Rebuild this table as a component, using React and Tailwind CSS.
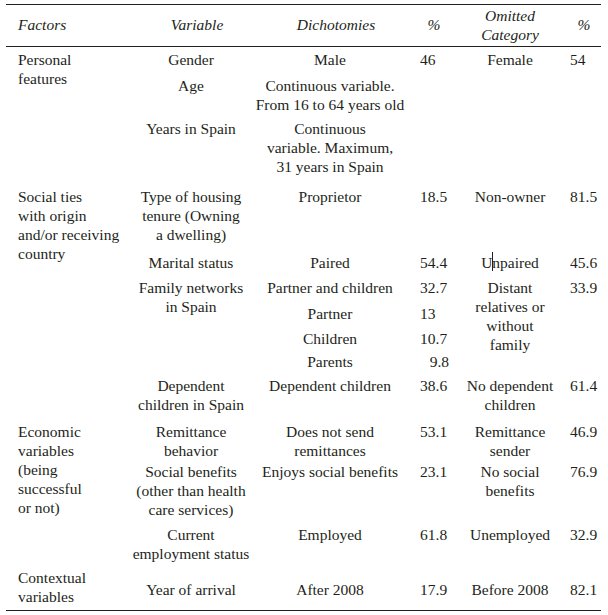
import React from 'react'

// column helpers
const F = 'pl-3 text-left'
const V = 'text-center'
const D = 'text-center'
const P = 'pl-3 text-left'
const O = 'text-center'
const Q = 'pl-[10px] text-left'

function Td({ className = '', children, ...rest }) {
  return (
    <td className={`p-0 align-top whitespace-nowrap ${className}`} {...rest}>
      {children}
    </td>
  )
}

function Th({ className = '', children, ...rest }) {
  return (
    <th className={`px-0 py-[2px] align-middle font-normal italic whitespace-nowrap ${className}`} {...rest}>
      {children}
    </th>
  )
}

export default function App() {
  return (
    <div className="min-h-[615px] w-[608px] bg-white pt-[4px] pl-[6px] font-['Liberation_Serif',serif] text-[15.5px] leading-[19px] text-[#231f20]">
      <table className="w-[595px] table-fixed border-collapse">
        <colgroup>
          <col className="w-[124px]" />
          <col className="w-[122px]" />
          <col className="w-[156px]" />
          <col className="w-[52px]" />
          <col className="w-[100px]" />
          <col className="w-[41px]" />
        </colgroup>
        <thead>
          <tr className="border-y border-[#231f20] leading-[18.5px]">
            <Th className="pl-3 text-left">Factors</Th>
            <Th className="pl-[12px] text-center">Variable</Th>
            <Th className="pl-[12px] text-center">Dichotomies</Th>
            <Th className="text-center">%</Th>
            <Th className="text-center">
              Omitted
              <br />
              Category
            </Th>
            <Th className="pl-[7px] text-center">%</Th>
          </tr>
        </thead>
        <tbody>
          {/* Personal features */}
          <tr>
            <Td className={`${F} pt-[3px]`} rowSpan={3}>
              Personal
              <br />
              features
            </Td>
            <Td className={`${V} pt-[3px]`}>Gender</Td>
            <Td className={`${D} pt-[3px]`}>Male</Td>
            <Td className={`${P} pt-[3px]`}>46</Td>
            <Td className={`${O} pt-[3px]`}>Female</Td>
            <Td className={`${Q} pt-[3px]`}>54</Td>
          </tr>
          <tr>
            <Td className={`${V} pt-[7px]`}>Age</Td>
            <Td className={`${D} pt-[7px]`}>
              Continuous variable.
              <br />
              From 16 to 64 years old
            </Td>
            <Td className="pt-[7px]" />
            <Td className="pt-[7px]" />
            <Td className="pt-[7px]" />
          </tr>
          <tr>
            <Td className={`${V} pt-[5px]`}>Years in Spain</Td>
            <Td className={`${D} pt-[5px]`}>
              Continuous
              <br />
              variable. Maximum,
              <br />
              31 years in Spain
            </Td>
            <Td className="pt-[5px]" />
            <Td className="pt-[5px]" />
            <Td className="pt-[5px]" />
          </tr>

          {/* Social ties */}
          <tr>
            <Td className={`${F} pt-[11px]`} rowSpan={7}>
              Social ties
              <br />
              with origin
              <br />
              and/or receiving
              <br />
              country
            </Td>
            <Td className={`${V} pt-[11px]`}>
              Type of housing
              <br />
              tenure (Owning
              <br />
              a dwelling)
            </Td>
            <Td className={`${D} pt-[11px]`}>Proprietor</Td>
            <Td className={`${P} pt-[11px]`}>18.5</Td>
            <Td className={`${O} pt-[11px]`}>Non-owner</Td>
            <Td className={`${Q} pt-[11px]`}>81.5</Td>
          </tr>
          <tr>
            <Td className={`${V} pt-[9px]`}>Marital status</Td>
            <Td className={`${D} pt-[9px]`}>Paired</Td>
            <Td className={`${P} pt-[9px]`}>54.4</Td>
            <Td className={`${O} pt-[9px]`}>
              <span className="relative">
                U
                <span className="absolute top-[-2px] right-[-1px] h-[19px] w-px bg-[#231f20]" />
              </span>
              npaired
            </Td>
            <Td className={`${Q} pt-[9px]`}>45.6</Td>
          </tr>
          <tr>
            <Td className={`${V} pt-[5.5px]`} rowSpan={4}>
              Family networks
              <br />
              in Spain
            </Td>
            <Td className={`${D} pt-[5.5px]`}>Partner and children</Td>
            <Td className={`${P} pt-[5.5px]`}>32.7</Td>
            <Td className={`${O} pt-[5.5px]`} rowSpan={4}>
              Distant
              <br />
              relatives or
              <br />
              without
              <br />
              family
            </Td>
            <Td className={`${Q} pt-[5.5px]`} rowSpan={4}>33.9</Td>
          </tr>
          <tr>
            <Td className={`${D} pt-[7px]`}>Partner</Td>
            <Td className={`${P} pt-[7px]`}>13</Td>
          </tr>
          <tr>
            <Td className={`${D} pt-[6px]`}>Children</Td>
            <Td className={`${P} pt-[6px]`}>10.7</Td>
          </tr>
          <tr>
            <Td className={`${D} pt-[4.5px]`}>Parents</Td>
            <Td className="pt-[4.5px] pr-[11px] text-right">9.8</Td>
          </tr>
          <tr>
            <Td className={`${V} pt-[5px]`}>
              Dependent
              <br />
              children in Spain
            </Td>
            <Td className={`${D} pt-[5px]`}>Dependent children</Td>
            <Td className={`${P} pt-[5px]`}>38.6</Td>
            <Td className={`${O} pt-[5px]`}>
              No dependent
              <br />
              children
            </Td>
            <Td className={`${Q} pt-[5px]`}>61.4</Td>
          </tr>

          {/* Economic variables */}
          <tr>
            <Td className={`${F} pt-[7.5px]`} rowSpan={3}>
              Economic
              <br />
              variables
              <br />
              (being
              <br />
              successful
              <br />
              or not)
            </Td>
            <Td className={`${V} pt-[7.5px]`}>
              Remittance
              <br />
              behavior
            </Td>
            <Td className={`${D} pt-[7.5px]`}>
              Does not send
              <br />
              remittances
            </Td>
            <Td className={`${P} pt-[7.5px]`}>53.1</Td>
            <Td className={`${O} pt-[7.5px]`}>
              Remittance
              <br />
              sender
            </Td>
            <Td className={`${Q} pt-[7.5px]`}>46.9</Td>
          </tr>
          <tr>
            <Td className={`${V} pt-[2.5px]`}>
              Social benefits
              <br />
              (other than health
              <br />
              care services)
            </Td>
            <Td className={`${D} pt-[2.5px]`}>Enjoys social benefits</Td>
            <Td className={`${P} pt-[2.5px]`}>23.1</Td>
            <Td className={`${O} pt-[2.5px]`}>
              No social
              <br />
              benefits
            </Td>
            <Td className={`${Q} pt-[2.5px]`}>76.9</Td>
          </tr>
          <tr>
            <Td className={`${V} pt-[6px]`}>
              Current
              <br />
              employment status
            </Td>
            <Td className={`${D} pt-[6px]`}>Employed</Td>
            <Td className={`${P} pt-[6px]`}>61.8</Td>
            <Td className={`${O} pt-[6px]`}>Unemployed</Td>
            <Td className={`${Q} pt-[6px]`}>32.9</Td>
          </tr>

          {/* Contextual variables */}
          <tr className="border-b border-[#231f20]">
            <Td className={`${F} pt-[5px] pb-[3.5px]`}>
              Contextual
              <br />
              variables
            </Td>
            <Td className={`${V} pt-[10px] pb-[3.5px] !align-middle`}>Year of arrival</Td>
            <Td className={`${D} pt-[10px] pb-[3.5px] !align-middle`}>After 2008</Td>
            <Td className={`${P} pt-[10px] pb-[3.5px] !align-middle`}>17.9</Td>
            <Td className={`${O} pt-[10px] pb-[3.5px] !align-middle`}>Before 2008</Td>
            <Td className={`${Q} pt-[10px] pb-[3.5px] !align-middle`}>82.1</Td>
          </tr>
        </tbody>
      </table>
    </div>
  )
}
